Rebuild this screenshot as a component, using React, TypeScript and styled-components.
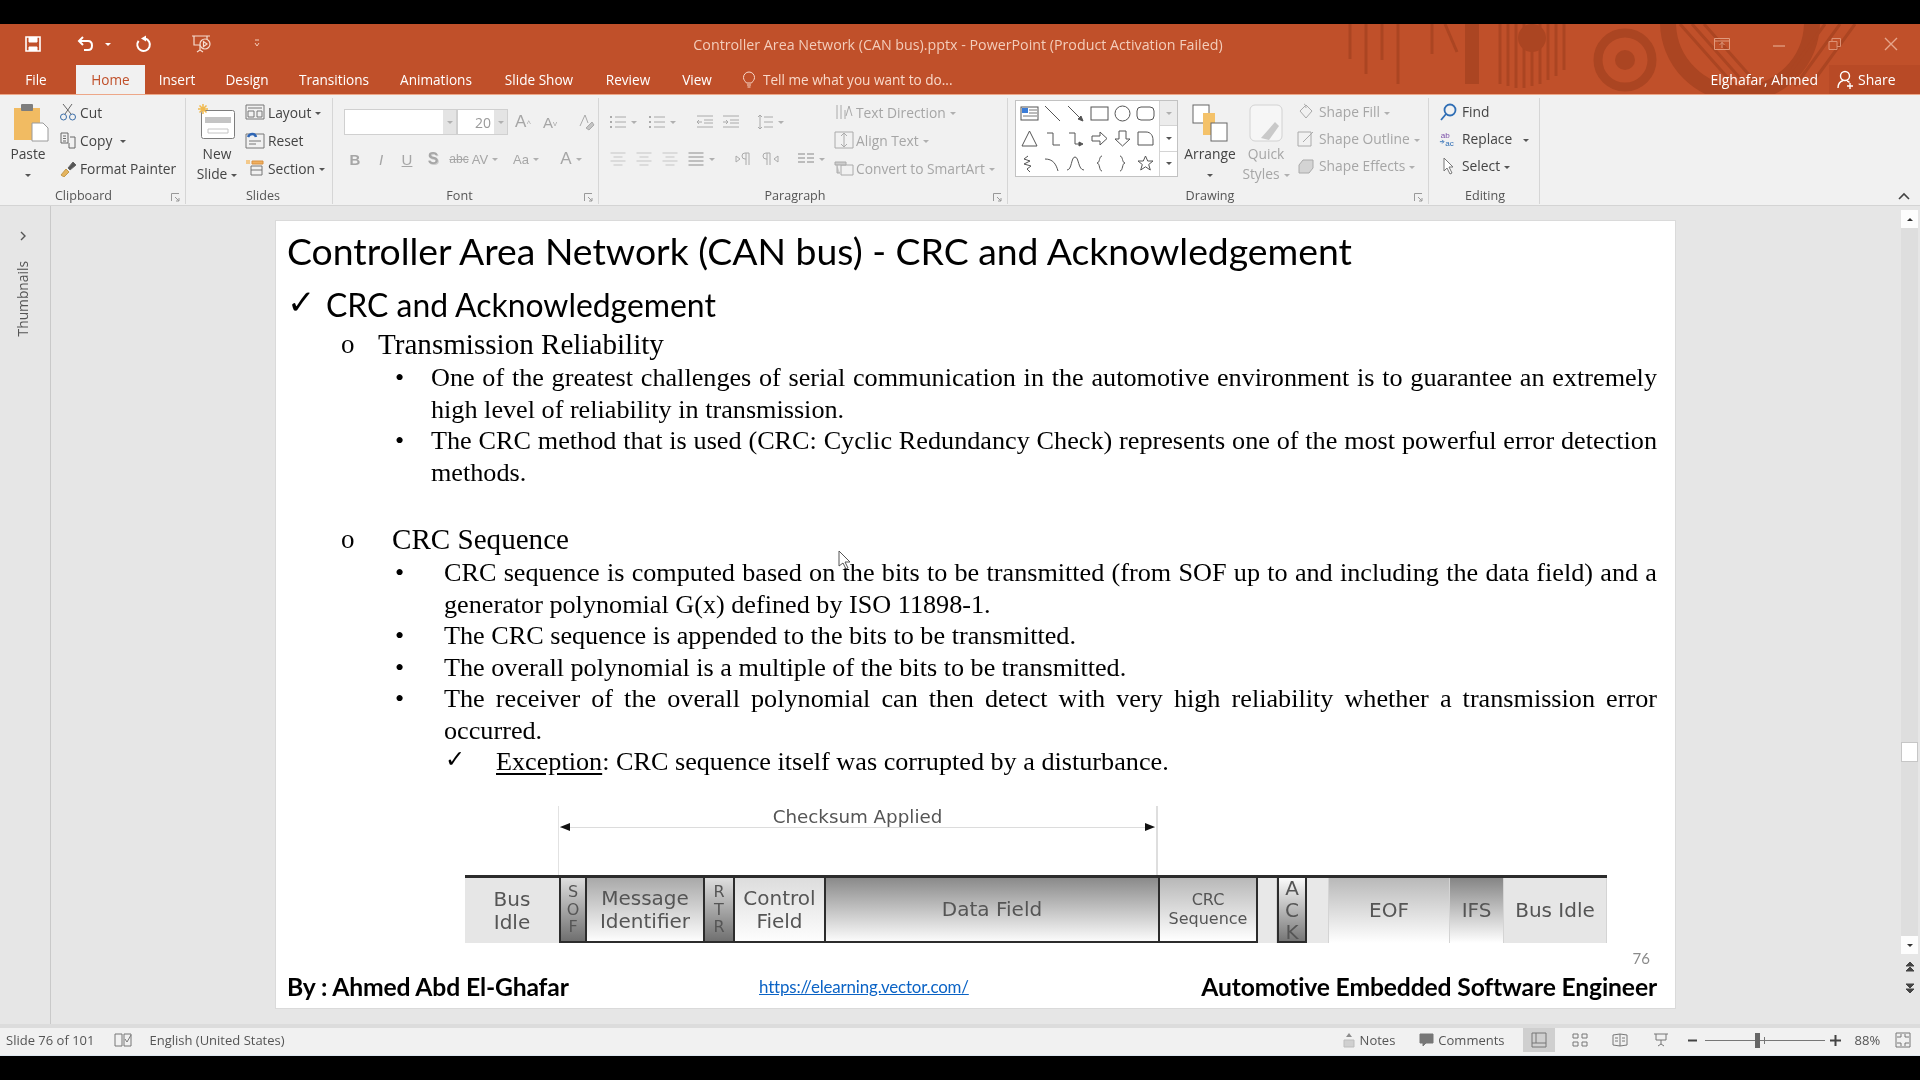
import React from 'react'
import styled, { createGlobalStyle } from 'styled-components'

const GlobalStyle = createGlobalStyle`
  html, body { margin: 0; padding: 0; background: #000; }
  #root { width: 1920px; height: 1080px; overflow: hidden; }
`

const UI_FONT = `"Open Sans", "Noto Sans", sans-serif`
const ORANGE = '#c0502a'
const DISABLED = '#a6a6a6'

const Screen = styled.div`
  width: 1920px;
  height: 1080px;
  padding: 24px 0;
  box-sizing: border-box;
  display: flex;
  flex-direction: column;
  background: #000;
  font-family: ${UI_FONT};
  filter: blur(0.45px);
  position: relative;
  overflow: hidden;
`

/* ---------- title bar ---------- */
const TitleBar = styled.div`
  position: relative;
  height: 70px;
  flex: none;
  background: ${ORANGE};
  color: #fff;
  border-bottom: 1px solid #eda788;
  overflow: hidden;
`
const Decoration = styled.svg`
  position: absolute;
  right: 0;
  top: 0;
`
const TopRow = styled.div`
  position: relative;
  height: 40px;
  display: grid;
  grid-template-columns: 1fr auto 1fr;
  align-items: center;
`
const Qat = styled.div`
  display: flex;
  align-items: center;
  padding-left: 24px;
`
const QatSlot = styled.span<{ $w: number }>`
  display: flex;
  width: ${p => p.$w}px;
  align-items: center;
`
const DocTitle = styled.div`
  font-size: 14.25px;
  color: #f3cdbb;
  transform: translateX(-2px);
`
const WinControls = styled.div`
  display: flex;
  justify-content: flex-end;
  align-items: center;
  padding-right: 22px;
  gap: 42px;
`
const TabRow = styled.div`
  position: relative;
  height: 30px;
  display: flex;
  align-items: flex-end;
`
const Tab = styled.div<{ $w: number; $active?: boolean }>`
  width: ${p => p.$w}px;
  height: 29px;
  box-sizing: border-box;
  display: flex;
  align-items: center;
  justify-content: center;
  font-size: 13.6px;
  color: ${p => (p.$active ? ORANGE : '#fff')};
  background: ${p => (p.$active ? '#f1f1f1' : 'transparent')};
`
const TellMe = styled.div`
  display: flex;
  align-items: center;
  gap: 7px;
  height: 29px;
  margin-left: 15px;
  font-size: 13.6px;
  color: #f8d9ca;
`
const Account = styled.div`
  margin-left: auto;
  height: 29px;
  display: flex;
  align-items: center;
  font-size: 14px;
`
const ShareBox = styled.div`
  display: flex;
  align-items: center;
  gap: 3px;
  height: 100%;
  width: 91px;
  margin-left: 11px;
  padding-left: 8px;
  box-sizing: border-box;
  background: #b84a26;
`

/* ---------- ribbon ---------- */
const Ribbon = styled.div`
  height: 111px;
  flex: none;
  display: flex;
  background: #f1f1f1;
  border-bottom: 1px solid #d4d4d4;
  box-sizing: border-box;
  color: #444;
  font-size: 13.8px;
`
const Group = styled.div<{ $w: number }>`
  width: ${p => p.$w}px;
  height: 106px;
  flex: none;
  display: flex;
  flex-direction: column;
  box-sizing: border-box;
  border-right: 1px solid #d6d6d6;
  margin-top: 3px;
  position: relative;
`
const GroupBody = styled.div<{ $pl?: number }>`
  height: 88px;
  flex: none;
  display: flex;
  padding-left: ${p => p.$pl ?? 0}px;
`
const GroupLabel = styled.div<{ $shift?: number }>`
  height: 18px;
  flex: none;
  line-height: 20px;
  text-align: center;
  font-size: 12.6px;
  color: #555;
  transform: translateX(${p => p.$shift ?? 0}px);
`
const Launcher = styled.svg`
  position: absolute;
  right: 5px;
  bottom: 2px;
`
const LargeBtn = styled.div<{ $w: number; $disabled?: boolean; $ml?: number }>`
  width: ${p => p.$w}px;
  margin-left: ${p => p.$ml ?? 0}px;
  flex: none;
  display: flex;
  flex-direction: column;
  align-items: center;
  padding-top: 6px;
  line-height: 20px;
  color: ${p => (p.$disabled ? DISABLED : '#444')};
`
const LargeIcon = styled.div<{ $ml?: number }>`
  height: 37px;
  display: flex;
  align-items: flex-start;
  justify-content: center;
  margin: 0 0 3px ${p => p.$ml ?? 0}px;
`
const CmdColumn = styled.div<{ $ml?: number; $row?: number }>`
  display: flex;
  flex-direction: column;
  margin-left: ${p => p.$ml ?? 0}px;
  & > div { height: ${p => p.$row ?? 28}px; }
`
const CmdRow = styled.div<{ $gap?: number; $disabled?: boolean }>`
  display: flex;
  align-items: center;
  gap: ${p => p.$gap ?? 3}px;
  white-space: nowrap;
  color: ${p => (p.$disabled ? DISABLED : '#444')};
`
const IconSlot = styled.span<{ $w?: number }>`
  width: ${p => p.$w ?? 18}px;
  flex: none;
  display: flex;
  align-items: center;
  justify-content: center;
`
const Caret = styled.span<{ $disabled?: boolean }>`
  display: inline-block;
  width: 0;
  height: 0;
  margin-left: 4px;
  vertical-align: middle;
  border-left: 3px solid transparent;
  border-right: 3px solid transparent;
  border-top: 3px solid ${p => (p.$disabled ? '#b0b0b0' : '#555')};
`
const ToolStack = styled.div`
  display: flex;
  flex-direction: column;
  gap: 7px;
  padding-top: 9px;
`
const ToolRow = styled.div`
  display: flex;
  align-items: center;
  height: 30px;
`
const Combo = styled.div<{ $w: number; $ml?: number }>`
  width: ${p => p.$w}px;
  margin-left: ${p => p.$ml ?? 0}px;
  height: 26px;
  box-sizing: border-box;
  background: #fff;
  border: 1px solid #d0d0d0;
  display: flex;
  align-items: center;
  justify-content: flex-end;
  color: #9a9a9a;
  font-size: 14px;
`
const ComboArrow = styled.span`
  width: 13px;
  height: 100%;
  margin-left: 3px;
  background: #e4e4e4;
  display: flex;
  align-items: center;
  justify-content: center;
  & > span { margin: 0; }
`
const Tool = styled.span<{ $w: number; $left?: boolean; $size?: number }>`
  width: ${p => p.$w}px;
  flex: none;
  display: flex;
  align-items: center;
  justify-content: ${p => (p.$left ? 'flex-start' : 'center')};
  color: ${DISABLED};
  font-size: ${p => p.$size ?? 14}px;
`
const ToolLetter = styled.span<{ $italic?: boolean; $under?: boolean; $bold?: boolean; $strike?: boolean }>`
  font-family: "Liberation Sans", sans-serif;
  font-style: ${p => (p.$italic ? 'italic' : 'normal')};
  font-weight: ${p => (p.$bold ? 700 : 400)};
  text-decoration: ${p => (p.$under ? 'underline' : p.$strike ? 'line-through' : 'none')};
`
const Gallery = styled.div`
  width: 163px;
  height: 77px;
  margin: 2px 0 0 0;
  box-sizing: border-box;
  border: 1px solid #c2c2c2;
  background: #fff;
  display: flex;
`
const GalleryGrid = styled.div`
  flex: 1;
  display: grid;
  grid-template-columns: repeat(6, 1fr);
  grid-template-rows: repeat(3, 1fr);
  align-items: center;
  justify-items: center;
  padding: 0 2px;
`
const GalleryScroll = styled.div`
  width: 17px;
  border-left: 1px solid #d4d4d4;
  display: flex;
  flex-direction: column;
  & > span {
    flex: 1;
    display: flex;
    align-items: center;
    justify-content: center;
    border-bottom: 1px solid #d4d4d4;
  }
  & > span:first-child { background: #ececec; }
  & > span:last-child { border-bottom: 0; }
`
const Collapse = styled.svg`
  margin: 97px 10px 0 auto;
`

/* ---------- workspace ---------- */
const Workspace = styled.div`
  flex: 1;
  min-height: 0;
  display: flex;
  background: #e6e6e6;
  border-bottom: 4px solid #dcdcdc;
`
const Rail = styled.div`
  width: 51px;
  flex: none;
  box-sizing: border-box;
  border-right: 1px solid #c9c9c9;
  display: flex;
  flex-direction: column;
  align-items: center;
  padding-top: 25px;
  padding-right: 5px;
  color: #555;
`
const RailText = styled.div`
  margin-top: 20px;
  writing-mode: vertical-rl;
  transform: rotate(180deg);
  font-size: 13.8px;
`
const Stage = styled.div`
  flex: 1;
  padding: 14px 0 0 224px;
`
const Slide = styled.div`
  width: 1401px;
  height: 789px;
  box-sizing: border-box;
  background: #fff;
  border: 1px solid #dadada;
  padding: 8px 18px 0 11px;
  color: #000;
  display: flex;
  flex-direction: column;
`
const SlideTitle = styled.div`
  font-family: Lato, "Open Sans", sans-serif;
  font-size: 37.35px;
  line-height: 44px;
  white-space: nowrap;
`
const HeadingRow = styled.div`
  display: flex;
  align-items: center;
  height: 38px;
  margin-top: 13px;
  font-family: Lato, "Open Sans", sans-serif;
  font-size: 31.9px;
`
const HeadingCheck = styled.span`
  width: 39px;
  flex: none;
  font-family: "DejaVu Sans", sans-serif;
  font-weight: 700;
  font-size: 34px;
  line-height: 28px;
  position: relative;
  top: -3px;
`
const Section = styled.div<{ $mt: number; $indent: number }>`
  display: flex;
  align-items: center;
  height: 33px;
  margin-top: ${p => p.$mt}px;
  padding-left: 54px;
  font-family: "Liberation Serif", serif;
  font-size: 29.1px;
  & > span:first-child {
    width: ${p => p.$indent}px;
    flex: none;
    font-size: 27px;
  }
`
const BulletList = styled.div`
  display: flex;
  flex-direction: column;
  padding-top: 1px;
  font-family: "Liberation Serif", serif;
  font-size: 26.2px;
  line-height: 31.55px;
`
const Bullet = styled.div<{ $indent: number }>`
  display: flex;
  padding-left: 108px;
  & > span {
    width: ${p => p.$indent}px;
    flex: none;
  }
  & > p {
    flex: 1;
    margin: 0;
    text-align: justify;
  }
`
const SubBullet = styled.div`
  display: flex;
  padding-left: 158px;
  & > span {
    width: 51px;
    flex: none;
    font-family: "DejaVu Sans", sans-serif;
    font-weight: 700;
    font-size: 24px;
    position: relative;
    top: -2px;
  }
  & > p { margin: 0; }
  u { text-underline-offset: 3px; }
`
const Span = styled.div`
  width: 600px;
  height: 69px;
  margin: 28px 0 0 271px;
  box-sizing: border-box;
  border-left: 1px solid #e2e2e2;
  border-right: 2px solid #dedede;
  position: relative;
  flex: none;
  text-align: center;
  font-family: "DejaVu Sans", sans-serif;
  font-size: 18.3px;
  line-height: 21px;
  color: #555;
`
const SpanArrow = styled.div`
  height: 1px;
  margin: 0 1px;
  background: #dcdcdc;
  position: relative;
  &::before, &::after {
    content: '';
    position: absolute;
    top: -4px;
    border-top: 4.500px solid transparent;
    border-bottom: 4.500px solid transparent;
  }
  &::before { left: 0; border-right: 10px solid #111; }
  &::after { right: 0; border-left: 10px solid #111; }
`
const FrameBar = styled.div`
  width: 1142px;
  height: 68px;
  margin-left: 178px;
  flex: none;
  display: flex;
  box-sizing: border-box;
  border-top: 3px solid #2c2c2c;
  font-family: "DejaVu Sans", sans-serif;
  color: #555;
`
const Field = styled.div<{ $w: number; $from: string; $to: string; $size?: number; $frame?: boolean; $tall?: boolean }>`
  width: ${p => p.$w}px;
  flex: none;
  box-sizing: border-box;
  display: flex;
  align-items: center;
  justify-content: center;
  text-align: center;
  background: linear-gradient(${p => p.$from}, ${p => p.$to});
  font-size: ${p => p.$size ?? 20}px;
  line-height: ${p => (p.$tall ? 1.1 : 1.15)};
  border-right: ${p => (p.$frame ? '2px solid #2c2c2c' : '1px solid #d4d4d4')};
  border-bottom: ${p => (p.$frame ? '2px solid #2c2c2c' : '0')};
`
const PageNo = styled.div`
  height: 24px;
  padding-right: 7px;
  display: flex;
  align-items: flex-end;
  justify-content: flex-end;
  color: #8a8a8a;
  font-family: Lato, sans-serif;
  font-size: 15px;
`
const SlideFooter = styled.div`
  display: grid;
  grid-template-columns: 472px 1fr auto;
  align-items: center;
  margin-top: 5px;
  height: 28px;
  font-family: Lato, "Open Sans", sans-serif;
  font-weight: 700;
  font-size: 24.7px;
  letter-spacing: -0.15px;
  white-space: nowrap;
`
const FooterLink = styled.a`
  font-family: Lato, "Open Sans", sans-serif;
  font-weight: 400;
  font-size: 16.9px;
  color: #0b63c5;
  text-decoration: underline;
`
const ScrollBar = styled.div`
  width: 21px;
  flex: none;
  display: flex;
  flex-direction: column;
  align-items: center;
  padding-top: 4px;
  box-sizing: border-box;
`
const ScrollTrack = styled.div`
  width: 17px;
  flex: 1;
  display: flex;
  flex-direction: column;
  background: #dedede;
`
const ScrollBtn = styled.div`
  height: 18px;
  background: #fdfdfd;
  display: flex;
  align-items: center;
  justify-content: center;
  flex: none;
`
const ScrollThumb = styled.div`
  height: 20px;
  margin-top: 514px;
  background: #fff;
  border: 1px solid #c6c6c6;
  box-sizing: border-box;
`
const PageJump = styled.div`
  height: 17px;
  margin-top: 4px;
  display: flex;
  align-items: center;
  justify-content: center;
  &:last-child { margin-bottom: 28px; }
`

/* ---------- status bar ---------- */
const StatusBar = styled.div`
  height: 28px;
  flex: none;
  display: flex;
  align-items: center;
  background: #f1f1f1;
  color: #555;
  font-size: 13px;
  padding: 0 0 3px 6px;
  box-sizing: border-box;
  border-bottom: 1px solid #dfe8f0;
`
const StatusItem = styled.div<{ $ml?: number; $w?: number; $active?: boolean }>`
  display: flex;
  align-items: center;
  justify-content: ${p => (p.$w ? 'center' : 'flex-start')};
  gap: 4px;
  height: 100%;
  margin-left: ${p => p.$ml ?? 0}px;
  width: ${p => (p.$w ? `${p.$w}px` : 'auto')};
  flex: none;
  background: ${p => (p.$active ? '#cfcfcf' : 'transparent')};
`
const ZoomTrack = styled.div`
  width: 120px;
  height: 1px;
  background: #777;
  position: relative;
  flex: none;
`
const ZoomThumb = styled.div`
  position: absolute;
  left: 50px;
  top: -7px;
  width: 5px;
  height: 15px;
  background: #666;
`
const ZoomTick = styled.div`
  position: absolute;
  left: 59px;
  top: -3px;
  width: 1px;
  height: 7px;
  background: #777;
`
const Pointer = styled.svg`
  position: absolute;
  left: 838px;
  top: 550px;
`

const Icon: React.FC<{ w?: number; h?: number; vb?: string; c?: string; sw?: number; children: React.ReactNode }> = ({
  w = 18,
  h = 18,
  vb = '0 0 18 18',
  c = '#666',
  sw = 1,
  children,
}) => (
  <svg width={w} height={h} viewBox={vb} fill="none" stroke={c} strokeWidth={sw}>
    {children}
  </svg>
)

const LIST_C = '#aaa'

const Cmd: React.FC<{ icon: React.ReactNode; slot?: number; gap?: number; disabled?: boolean; caret?: boolean; children: React.ReactNode }> = ({
  icon,
  slot,
  gap,
  disabled,
  caret,
  children,
}) => (
  <CmdRow $gap={gap} $disabled={disabled}>
    <IconSlot $w={slot}>{icon}</IconSlot>
    <span>
      {children}
      {caret && <Caret $disabled={disabled} />}
    </span>
  </CmdRow>
)

const LauncherMark = () => (
  <Launcher width="9" height="9" viewBox="0 0 9 9" fill="none" stroke="#999">
    <path d="M.5 8V.5H8M4 4l4 4M8 5v3H5" />
  </Launcher>
)

const shapes: React.ReactNode[] = [
  <g key="0"><rect x="1" y="3" width="17" height="13" stroke="#555" /><rect x="2" y="4" width="6" height="5" fill="#3b7dd8" stroke="none" /><path d="M9 6h8M9 9h8M3 12h14" stroke="#777" /></g>,
  <path key="1" d="M2 2l15 15" />,
  <g key="2"><path d="M2 2l13 13" /><path d="M17 17l-5-2 3-3z" fill="#555" /></g>,
  <rect key="3" x="1" y="3" width="17" height="13" />,
  <circle key="4" cx="9.5" cy="9.5" r="7.5" />,
  <rect key="5" x="1" y="3" width="17" height="13" rx="4" />,
  <path key="6" d="M9.5 2L2 17h15z" />,
  <path key="7" d="M4 4h6v12h7" />,
  <g key="8"><path d="M3 4h6v11h6" /><path d="M17 15l-4 2v-4z" fill="#555" /></g>,
  <path key="9" d="M2 7h8V3l7 6.5-7 6.5v-4H2z" />,
  <path key="10" d="M6 2h7v8h4l-7.500 7L2 10h4z" />,
  <path key="11" d="M2 16V3h8c5 0 7 4 7 8v5z" />,
  <path key="12" d="M8 2L4 5l6 2-6 3 7 2-4 3 3 3" />,
  <path key="13" d="M2 5c8 0 11 5 13 12" />,
  <path key="14" d="M1 16c5 0 4-13 8-13s3 13 9 13" />,
  <path key="15" d="M12 2c-3 0-2 7-5 7 3 0 2 8 5 8" />,
  <path key="16" d="M7 2c3 0 2 7 5 7-3 0-2 8-5 8" />,
  <path key="17" d="M9.500 2l2.200 5h5.300l-4.300 3.500 1.600 5.500-4.800-3.200L4.700 16l1.600-5.500L2 7h5.300z" />,
]

const BulletsIcon = () => (
  <Icon c={LIST_C}>
    <path d="M6 4h11M6 9h11M6 14h11" />
    <path d="M1 4h2M1 9h2M1 14h2" strokeWidth="2" />
  </Icon>
)

const LinesIcon: React.FC<{ w?: number[]; c?: string }> = ({ w = [15, 15, 15, 15], c = LIST_C }) => (
  <Icon c={c}>
    {w.map((l, i) => (
      <path key={i} d={`M${(18 - l) / 2} ${3 + i * 4}h${l}`} strokeWidth="1.4" />
    ))}
  </Icon>
)

const App: React.FC = () => {
  return (
    <>
      <GlobalStyle />
      <Screen>
        <TitleBar>
          <Decoration width="600" height="70" viewBox="0 0 600 70">
            <g fill="none" stroke="#ab4522">
              <path d="M30 0v35M46 0v50M62 0v36M78 0v60M112 0v30" strokeWidth="3" />
              <path d="M125 0l12 28" strokeWidth="3" />
              <path d="M152 0v60" strokeWidth="14" />
              <path d="M180 0v60M188 0v62M196 0v64M204 0v64M212 0v62M220 0v60M228 0v56M236 0v52M244 0v46" strokeWidth="3" />
              <circle cx="305" cy="36" r="27" strokeWidth="9" />
              <circle cx="305" cy="36" r="10" fill="#ab4522" strokeWidth="0" />
              <circle cx="420" cy="-2" r="72" strokeWidth="16" />
              <path d="M360 0l55 62M372 0l55 62M384 0l55 62M505 0l-45 62M520 0l-45 62M535 0l-45 62" strokeWidth="3" />
            </g>
            <circle cx="212" cy="14" r="14" fill="#ab4522" />
          </Decoration>
          <TopRow>
            <Qat>
              <QatSlot $w={52}>
                <Icon w={18} h={18} c="#fff" sw={1.6}>
                  <path d="M2 2h14v14H2z" />
                  <path d="M5 2v5h8V2M5 16v-4h8v4" fill="#fff" strokeWidth="1" />
                </Icon>
              </QatSlot>
              <QatSlot $w={29}>
                <Icon w={20} h={18} vb="0 0 20 18" c="#fff" sw={2}>
                  <path d="M7 2L3 6l4 4M3 6h9c3 0 4 2 4 4.500S15 15 12 15H8" />
                </Icon>
              </QatSlot>
              <QatSlot $w={30}>
                <Caret style={{ borderTopColor: '#fff', margin: 0 }} />
              </QatSlot>
              <QatSlot $w={55}>
                <Icon w={18} h={18} c="#fff" sw={2}>
                  <path d="M10 3.500a6.300 6.300 0 1 1-6.400 2.300" />
                  <path d="M6 3.500l5-3v6z" fill="#fff" strokeWidth="0" />
                </Icon>
              </QatSlot>
              <QatSlot $w={63}>
                <Icon w={22} h={20} vb="0 0 22 20" c="#f6dccf" sw={1.2}>
                  <path d="M2 2h18M4 2v9h13V2M10 11v5M7 18l3-2 3 2" />
                  <circle cx="15" cy="10" r="5" fill="#c0502a" />
                  <path d="M13.500 7.500l3.500 2.500-3.500 2.500z" />
                </Icon>
              </QatSlot>
              <QatSlot $w={10}>
                <Icon w={8} h={10} vb="0 0 8 10" c="#f4cdb9">
                  <path d="M2 1h4M2 4l2 3 2-3" />
                </Icon>
              </QatSlot>
            </Qat>
            <DocTitle>Controller Area Network (CAN bus).pptx - PowerPoint (Product Activation Failed)</DocTitle>
            <WinControls>
              <Icon w={16} h={14} vb="0 0 16 14" c="#e09a7d">
                <path d="M.5 1.500h15v11H.5zM.5 4h15M8 5v6M5.500 8L8 5.500 10.500 8" />
              </Icon>
              <Icon w={14} h={14} vb="0 0 14 14" c="#e09a7d" sw={1.4}>
                <path d="M1 9h12" />
              </Icon>
              <Icon w={14} h={14} vb="0 0 14 14" c="#dc9174">
                <path d="M1 4.500h8v8H1zM4 4.500V1.500h8.500v8H9" />
              </Icon>
              <Icon w={14} h={14} vb="0 0 14 14" c="#e6a68c" sw={1.4}>
                <path d="M1 1l12 12M13 1L1 13" />
              </Icon>
            </WinControls>
          </TopRow>
          <TabRow>
            <Tab $w={76} style={{ paddingRight: 4 }}>File</Tab>
            <Tab $w={69} $active>Home</Tab>
            <Tab $w={64}>Insert</Tab>
            <Tab $w={76}>Design</Tab>
            <Tab $w={98}>Transitions</Tab>
            <Tab $w={106}>Animations</Tab>
            <Tab $w={100}>Slide Show</Tab>
            <Tab $w={78}>Review</Tab>
            <Tab $w={60}>View</Tab>
            <TellMe>
              <Icon w={14} h={18} vb="0 0 14 18" c="#f8d9ca">
                <path d="M4.500 12C3 10 1.500 9 1.500 6.500a5.500 5.500 0 0 1 11 0C12.500 9 11 10 9.500 12zM5 14h4M5.500 16h3" />
              </Icon>
              Tell me what you want to do...
            </TellMe>
            <Account>
              Elghafar, Ahmed
              <ShareBox>
                <Icon w={18} h={20} vb="0 0 18 20" c="#fff" sw={1.4}>
                  <circle cx="8" cy="6" r="4.500" />
                  <path d="M1 18c0-4 2-6.500 5-7.500M10 11c1 .2 2 .8 2.500 1.500M13 13v6M10 16h6" />
                </Icon>
                Share
              </ShareBox>
            </Account>
          </TabRow>
        </TitleBar>

        <Ribbon>
          <Group $w={186}>
            <GroupBody>
              <LargeBtn $w={56}>
                <LargeIcon $ml={6}>
                  <svg width="36" height="38" viewBox="0 0 36 38">
                    <rect x="1" y="4" width="26" height="32" fill="#f1bb62" />
                    <rect x="8" y="0" width="12" height="7" rx="1" fill="#7d7d7d" />
                    <path d="M19 19h11l5 5v13H19z" fill="#fff" stroke="#9a9a9a" />
                  </svg>
                </LargeIcon>
                <span>Paste</span>
                <span><Caret style={{ margin: 0 }} /></span>
              </LargeBtn>
              <CmdColumn $ml={3}>
                <Cmd icon={<Icon c="#3b6ea8"><path d="M4 1l8 10M13 1L6 11" stroke="#666" /><circle cx="4.500" cy="14" r="3" /><circle cx="13.500" cy="14" r="3" /></Icon>}>Cut</Cmd>
                <Cmd caret icon={<Icon><path d="M2 2h7v10H2zM4 5h3M4 7.500h3M4 10h3" /><path d="M11 6h5v11h-6v-5" /></Icon>}>Copy&nbsp;</Cmd>
                <Cmd icon={<Icon c="#666"><path d="M2 16l5-6 3 3-5 5z" fill="#e5b45e" stroke="#c49a4c" /><path d="M9 9l5-6 3 3-6 5z" fill="#555" /></Icon>}>Format Painter</Cmd>
              </CmdColumn>
            </GroupBody>
            <GroupLabel $shift={-9}>Clipboard</GroupLabel>
            <LauncherMark />
          </Group>

          <Group $w={147}>
            <GroupBody $pl={4}>
              <LargeBtn $w={54}>
                <LargeIcon>
                  <svg width="38" height="36" viewBox="0 0 38 36" fill="none">
                    <rect x="3.500" y="6.500" width="33" height="28" rx="2" fill="#fff" stroke="#7d7d7d" />
                    <rect x="7" y="13" width="26" height="6" fill="#c4c4c4" />
                    <path d="M10 25h20v4H10z" stroke="#c4c4c4" />
                    <path d="M5 0v10M0 5h10M1.500 1.500l7 7M8.500 1.500l-7 7" stroke="#f0b94e" strokeWidth="1.500" />
                  </svg>
                </LargeIcon>
                <span>New</span>
                <span>Slide<Caret /></span>
              </LargeBtn>
              <CmdColumn $ml={1}>
                <Cmd slot={20} caret icon={<Icon w={20} c="#777" vb="0 0 20 18"><path d="M1 2h18v14H1zM3 5h14M3 8h6v6H3zM12 8h5v6h-5z" /></Icon>}>Layout</Cmd>
                <Cmd slot={20} icon={<Icon w={20} vb="0 0 20 18" c="#777"><path d="M1 3h18v14H1zM4 10h12M4 13h7" /><path d="M3 6c2-4 7-4 8 0" stroke="#2f66b5" strokeWidth="2.500" /></Icon>}>Reset</Cmd>
                <Cmd slot={20} caret icon={<Icon w={20} vb="0 0 20 18" c="#777"><path d="M7 2h11v3H7z" fill="#f0b060" stroke="#d89040" /><path d="M6 7h11v9H6zM6 11h11" /><path d="M1 1h4v4H1z" fill="#f3c98b" stroke="none" /></Icon>}>Section</Cmd>
              </CmdColumn>
            </GroupBody>
            <GroupLabel $shift={4}>Slides</GroupLabel>
          </Group>

          <Group $w={266}>
            <GroupBody $pl={9}>
              <ToolStack>
                <ToolRow>
                  <Combo $w={113} $ml={2}>
                    <ComboArrow><Caret $disabled /></ComboArrow>
                  </Combo>
                  <Combo $w={51}>
                    20
                    <ComboArrow><Caret $disabled /></ComboArrow>
                  </Combo>
                  <Tool $w={30} $size={17}><ToolLetter>A</ToolLetter><sup style={{ fontSize: 8 }}>^</sup></Tool>
                  <Tool $w={24} $size={15}><ToolLetter>A</ToolLetter><sup style={{ fontSize: 8 }}>v</sup></Tool>
                  <Tool $w={12} />
                  <Tool $w={24}>
                    <Icon c={LIST_C}><path d="M3 13L8 2l3 8" /><path d="M9 15l6-6 2 3-5 5z" fill="#c4c4c4" /></Icon>
                  </Tool>
                </ToolRow>
                <ToolRow>
                  <Tool $w={26} $size={15}><ToolLetter $bold>B</ToolLetter></Tool>
                  <Tool $w={26} $size={15}><ToolLetter $italic>I</ToolLetter></Tool>
                  <Tool $w={26} $size={15}><ToolLetter $under>U</ToolLetter></Tool>
                  <Tool $w={26} $size={16}><ToolLetter $bold style={{ textShadow: '1px 1px #ccc' }}>S</ToolLetter></Tool>
                  <Tool $w={26} $size={12}><ToolLetter $strike>abc</ToolLetter></Tool>
                  <Tool $w={26} $size={13}><ToolLetter>AV</ToolLetter><Caret $disabled /></Tool>
                  <Tool $w={13} />
                  <Tool $w={30} $size={13}><ToolLetter>Aa</ToolLetter><Caret $disabled /></Tool>
                  <Tool $w={16} />
                  <Tool $w={28} $size={17}><ToolLetter>A</ToolLetter><Caret $disabled /></Tool>
                </ToolRow>
              </ToolStack>
            </GroupBody>
            <GroupLabel $shift={-6}>Font</GroupLabel>
            <LauncherMark />
          </Group>

          <Group $w={409}>
            <GroupBody $pl={10}>
              <ToolStack style={{ width: 225, flex: 'none' }}>
                <ToolRow>
                  <Tool $w={39} $left><BulletsIcon /><Caret $disabled /></Tool>
                  <Tool $w={48} $left><BulletsIcon /><Caret $disabled /></Tool>
                  <Tool $w={26} $left><Icon c={LIST_C}><path d="M1 3h16M8 7h9M8 10h9M1 14h16M6 9H1M3 7L1 9l2 2" /></Icon></Tool>
                  <Tool $w={34} $left><Icon c={LIST_C}><path d="M1 3h16M8 7h9M8 10h9M1 14h16M1 9h5M4 7l2 2-2 2" /></Icon></Tool>
                  <Tool $w={30} $left><Icon c={LIST_C}><path d="M8 4h9M8 9h9M8 14h9M4 2v14M2 4l2-2 2 2M2 14l2 2 2-2" /></Icon><Caret $disabled /></Tool>
                </ToolRow>
                <ToolRow>
                  <Tool $w={26} $left><LinesIcon c="#d2d2d2" w={[15, 9, 15, 9]} /></Tool>
                  <Tool $w={26} $left><LinesIcon c="#d2d2d2" w={[15, 9, 15, 9]} /></Tool>
                  <Tool $w={26} $left><LinesIcon c="#d2d2d2" w={[15, 9, 15, 9]} /></Tool>
                  <Tool $w={48} $left><LinesIcon /><Caret $disabled /></Tool>
                  <Tool $w={27} $left><Icon c={LIST_C}><path d="M11 3v12M14 3v12M14 3h-4a3 3 0 0 0 0 6h1M1 6l4 3-4 3z" /></Icon></Tool>
                  <Tool $w={35} $left><Icon c={LIST_C}><path d="M5 3v12M8 3v12M8 3H4a3 3 0 0 0 0 6h1M16 6l-4 3 4 3z" /></Icon></Tool>
                  <Tool $w={28} $left><Icon c={LIST_C}><path d="M1 4h7M10 4h7M1 8h7M10 8h7M1 12h7M10 12h7" strokeWidth="1.400" /></Icon><Caret $disabled /></Tool>
                </ToolRow>
              </ToolStack>
              <CmdColumn>
                <Cmd slot={20} gap={2} disabled caret icon={<Icon w={20} vb="0 0 20 18" c={LIST_C}><path d="M3 2v14M7 2v14M11 7v9M15 3l-3 10M15 3l3 10" /></Icon>}>Text Direction</Cmd>
                <Cmd slot={20} gap={2} disabled caret icon={<Icon w={20} vb="0 0 20 18" c={LIST_C}><path d="M1 1h18v16H1zM10 3v12M7 5l3-3 3 3M7 13l3 3 3-3" /></Icon>}>Align Text</Cmd>
                <Cmd slot={20} gap={2} disabled caret icon={<Icon w={20} vb="0 0 20 18" c={LIST_C}><path d="M7 6h12v10H7z" /><path d="M1 3h11v3H1zM3 6v8h3" fill="#ccc" /></Icon>}>Convert to SmartArt</Cmd>
              </CmdColumn>
            </GroupBody>
            <GroupLabel $shift={-8}>Paragraph</GroupLabel>
            <LauncherMark />
          </Group>

          <Group $w={421}>
            <GroupBody $pl={7}>
              <Gallery>
                <GalleryGrid>
                  {shapes.map((s, i) => (
                    <Icon key={i} w={19} h={19} vb="0 0 19 19" c="#555">
                      {s}
                    </Icon>
                  ))}
                </GalleryGrid>
                <GalleryScroll>
                  <span><Caret $disabled style={{ margin: 0 }} /></span>
                  <span><Caret style={{ margin: 0 }} /></span>
                  <span><Caret style={{ margin: 0 }} /></span>
                </GalleryScroll>
              </Gallery>
              <LargeBtn $w={64}>
                <LargeIcon>
                  <svg width="36" height="38" viewBox="0 0 36 38" fill="none">
                    <rect x="1" y="1" width="16" height="18" fill="#fff" stroke="#666" />
                    <rect x="11" y="9" width="12" height="22" fill="#f4c26a" />
                    <rect x="19" y="19" width="16" height="18" fill="#fff" stroke="#666" />
                  </svg>
                </LargeIcon>
                <span>Arrange</span>
                <span><Caret style={{ margin: 0 }} /></span>
              </LargeBtn>
              <LargeBtn $w={48} $disabled>
                <LargeIcon>
                  <svg width="34" height="38" viewBox="0 0 34 38" fill="none">
                    <rect x="1" y="1" width="32" height="36" rx="5" fill="#f6f6f6" stroke="#d2d2d2" />
                    <path d="M12 34l14-16 4 4-10 14z" fill="#c9c9c9" />
                  </svg>
                </LargeIcon>
                <span>Quick</span>
                <span>Styles<Caret $disabled /></span>
              </LargeBtn>
              <CmdColumn $ml={7} $row={27}>
                <Cmd gap={4} disabled caret icon={<Icon c={LIST_C}><path d="M3 8l6-6 6 6-6 7z" /><path d="M7 1c1 0 2 2 2 4" /></Icon>}>Shape Fill</Cmd>
                <Cmd gap={4} disabled caret icon={<Icon c={LIST_C}><path d="M1 2h13v14H1zM6 12l10-10" /></Icon>}>Shape Outline</Cmd>
                <Cmd gap={4} disabled caret icon={<Icon c={LIST_C}><path d="M2 8l4-5h10v8l-4 5H2z" fill="#d4d4d4" /></Icon>}>Shape Effects</Cmd>
              </CmdColumn>
            </GroupBody>
            <GroupLabel $shift={-8}>Drawing</GroupLabel>
            <LauncherMark />
          </Group>

          <Group $w={111}>
            <GroupBody $pl={10}>
              <CmdColumn $row={27}>
                <Cmd gap={5} icon={<Icon c="#2f6eb5" sw={1.8}><circle cx="11" cy="7" r="5.500" /><path d="M7 11l-5 6" /></Icon>}>Find</Cmd>
                <Cmd gap={5} caret icon={<svg width="20" height="18" viewBox="0 0 20 18"><text x="2" y="8" fontSize="9" fontFamily="Liberation Sans" fill="#7a4ea8">ab</text><text x="7" y="17" fontSize="9" fontFamily="Liberation Sans" fill="#2f6eb5">ac</text><path d="M1 12h4M3.500 10l2 2-2 2" stroke="#2f6eb5" fill="none" /></svg>}>Replace&nbsp;&nbsp;</Cmd>
                <Cmd gap={5} caret icon={<Icon c="#777"><path d="M5 1v13l3-3 3 6 2-1-3-6h4z" fill="#fff" /></Icon>}>Select</Cmd>
              </CmdColumn>
            </GroupBody>
            <GroupLabel $shift={1}>Editing</GroupLabel>
          </Group>

          <Collapse width="12" height="8" viewBox="0 0 12 8" fill="none" stroke="#444" strokeWidth="1.600">
            <path d="M1 7l5-5 5 5" />
          </Collapse>
        </Ribbon>

        <Workspace>
          <Rail>
            <Icon w={10} h={10} vb="0 0 10 10" c="#555" sw={1.4}>
              <path d="M3 1l4 4-4 4" />
            </Icon>
            <RailText>Thumbnails</RailText>
          </Rail>
          <Stage>
            <Slide>
              <SlideTitle>Controller Area Network (CAN bus) - CRC and Acknowledgement</SlideTitle>
              <HeadingRow>
                <HeadingCheck>✓</HeadingCheck>
                CRC and Acknowledgement
              </HeadingRow>
              <Section $mt={4} $indent={37}>
                <span>o</span>
                Transmission Reliability
              </Section>
              <BulletList>
                <Bullet $indent={36}>
                  <span>•</span>
                  <p>
                    One of the greatest challenges of serial communication in the automotive environment is to guarantee an extremely high level of reliability in transmission.
                  </p>
                </Bullet>
                <Bullet $indent={36}>
                  <span>•</span>
                  <p>
                    The CRC method that is used (CRC: Cyclic Redundancy Check) represents one of the most powerful error detection methods.
                  </p>
                </Bullet>
              </BulletList>
              <Section $mt={35} $indent={51}>
                <span>o</span>
                CRC Sequence
              </Section>
              <BulletList>
                <Bullet $indent={49}>
                  <span>•</span>
                  <p>
                    CRC sequence is computed based on the bits to be transmitted (from SOF up to and including the data field) and a generator polynomial G(x) defined by ISO 11898-1.
                  </p>
                </Bullet>
                <Bullet $indent={49}>
                  <span>•</span>
                  <p>The CRC sequence is appended to the bits to be transmitted.</p>
                </Bullet>
                <Bullet $indent={49}>
                  <span>•</span>
                  <p>The overall polynomial is a multiple of the bits to be transmitted.</p>
                </Bullet>
                <Bullet $indent={49}>
                  <span>•</span>
                  <p>
                    The receiver of the overall polynomial can then detect with very high reliability whether a transmission error occurred.
                  </p>
                </Bullet>
                <SubBullet>
                  <span>✓</span>
                  <p>
                    <u>Exception</u>: CRC sequence itself was corrupted by a disturbance.
                  </p>
                </SubBullet>
              </BulletList>
              <Span>
                Checksum Applied
                <SpanArrow />
              </Span>
              <FrameBar>
                <Field $w={96} $from="#e6e6e6" $to="#e6e6e6" style={{ borderRight: '2px solid #2c2c2c' }}>Bus<br />Idle</Field>
                <Field $w={26} $from="#dedede" $to="#6f6f6f" $size={16} $frame $tall>S<br />O<br />F</Field>
                <Field $w={118} $from="#a9a9a9" $to="#fdfdfd" $frame>Message<br />Identifier</Field>
                <Field $w={30} $from="#dedede" $to="#707070" $size={16} $frame $tall>R<br />T<br />R</Field>
                <Field $w={91} $from="#dddddd" $to="#fdfdfd" $frame>Control<br />Field</Field>
                <Field $w={334} $from="#8a8a8a" $to="#fbfbfb" $frame>Data Field</Field>
                <Field $w={98} $from="#b8b8b8" $to="#ffffff" $size={16} $frame>CRC<br />Sequence</Field>
                <Field $w={19} $from="#e8e8e8" $to="#e8e8e8" />
                <Field $w={30} $from="#fbfbfb" $to="#767676" $size={20} $frame $tall style={{ borderLeft: '2px solid #2c2c2c' }}>A<br />C<br />K</Field>
                <Field $w={22} $from="#e8e8e8" $to="#e8e8e8" />
                <Field $w={121} $from="#b9b9b9" $to="#ffffff">EOF</Field>
                <Field $w={54} $from="#858585" $to="#ffffff">IFS</Field>
                <Field $w={103} $from="#e6e6e6" $to="#e6e6e6">Bus Idle</Field>
              </FrameBar>
              <PageNo>76</PageNo>
              <SlideFooter>
                <span>By : Ahmed Abd El-Ghafar</span>
                <FooterLink>https://elearning.vector.com/</FooterLink>
                <span>Automotive Embedded Software Engineer</span>
              </SlideFooter>
            </Slide>
          </Stage>
          <ScrollBar>
            <ScrollTrack>
              <ScrollBtn>
                <Caret style={{ margin: 0, transform: 'rotate(180deg)', borderTopColor: '#333' }} />
              </ScrollBtn>
              <ScrollThumb />
              <div style={{ flex: 1 }} />
              <ScrollBtn>
                <Caret style={{ margin: 0, borderTopColor: '#333' }} />
              </ScrollBtn>
            </ScrollTrack>
            <PageJump>
              <Icon w={12} h={12} vb="0 0 12 12" c="#444">
                <path d="M6 1l4 4H2zM6 6l4 4H2z" fill="#444" />
              </Icon>
            </PageJump>
            <PageJump>
              <Icon w={12} h={12} vb="0 0 12 12" c="#444">
                <path d="M6 6L2 2h8zM6 11L2 7h8z" fill="#444" />
              </Icon>
            </PageJump>
          </ScrollBar>
        </Workspace>

        <StatusBar>
          <span>Slide 76 of 101</span>
          <StatusItem $ml={20}>
            <Icon w={18} h={16} vb="0 0 18 16" c="#777">
              <path d="M1 2h7v12H1zM10 2h7v12h-7zM11 7l2 3 4-7" />
            </Icon>
          </StatusItem>
          <StatusItem $ml={17}>English (United States)</StatusItem>
          <StatusItem $ml={1057}>
            <Icon w={14} h={16} vb="0 0 14 16" c="#bdbdbd">
              <path d="M2 8h10v7H2z" fill="#d0d0d0" />
              <path d="M7 1L4 5h6z" fill="#8c8c8c" stroke="none" />
            </Icon>
            Notes
          </StatusItem>
          <StatusItem $ml={24}>
            <Icon w={15} h={16} vb="0 0 15 16" c="#777">
              <path d="M1 2h13v9H7l-3 3v-3H1z" fill="#777" />
            </Icon>
            Comments
          </StatusItem>
          <StatusItem $ml={18} $w={32} $active>
            <Icon w={16} h={16} vb="0 0 16 16" c="#777"><path d="M1 1h14v14H1zM1 11h14M5 1v10" /></Icon>
          </StatusItem>
          <StatusItem $ml={9} $w={32}>
            <Icon w={16} h={16} vb="0 0 16 16" c="#777"><path d="M1 2h5v4H1zM10 2h5v4h-5zM1 10h5v4H1zM10 10h5v4h-5z" /></Icon>
          </StatusItem>
          <StatusItem $ml={8} $w={32}>
            <Icon w={16} h={16} vb="0 0 16 16" c="#777"><path d="M8 2L1 3v10l7 1 7-1V3zM8 2v12M3 6h3M3 9h3M10 6h3M10 9h3" /></Icon>
          </StatusItem>
          <StatusItem $ml={9} $w={32}>
            <Icon w={16} h={16} vb="0 0 16 16" c="#777"><path d="M1 2h14M3 2v6h10V2M8 8v4M5 14l3-2 3 2" /></Icon>
          </StatusItem>
          <StatusItem $ml={4} $w={24}>
            <Icon w={11} h={11} vb="0 0 11 11" c="#444" sw={2}><path d="M1 5.500h9" /></Icon>
          </StatusItem>
          <ZoomTrack>
            <ZoomThumb />
            <ZoomTick />
          </ZoomTrack>
          <StatusItem $ml={5} $w={12}>
            <Icon w={11} h={11} vb="0 0 11 11" c="#444" sw={2}><path d="M0 5.500h11M5.500 0v11" /></Icon>
          </StatusItem>
          <StatusItem $ml={13}>88%</StatusItem>
          <StatusItem $ml={15}>
            <Icon w={16} h={16} vb="0 0 16 16" c="#777"><path d="M1 1h14v14H1zM2 5h4v-3M14 5h-4v-3M2 11h4v3M14 11h-4v3" /></Icon>
          </StatusItem>
        </StatusBar>
        <Pointer width="14" height="20" viewBox="0 0 14 20">
          <path d="M1 1v15l4-3 3 6 2-1-3-6h5z" fill="#fff" stroke="#555" />
        </Pointer>
      </Screen>
    </>
  )
}

export default App
